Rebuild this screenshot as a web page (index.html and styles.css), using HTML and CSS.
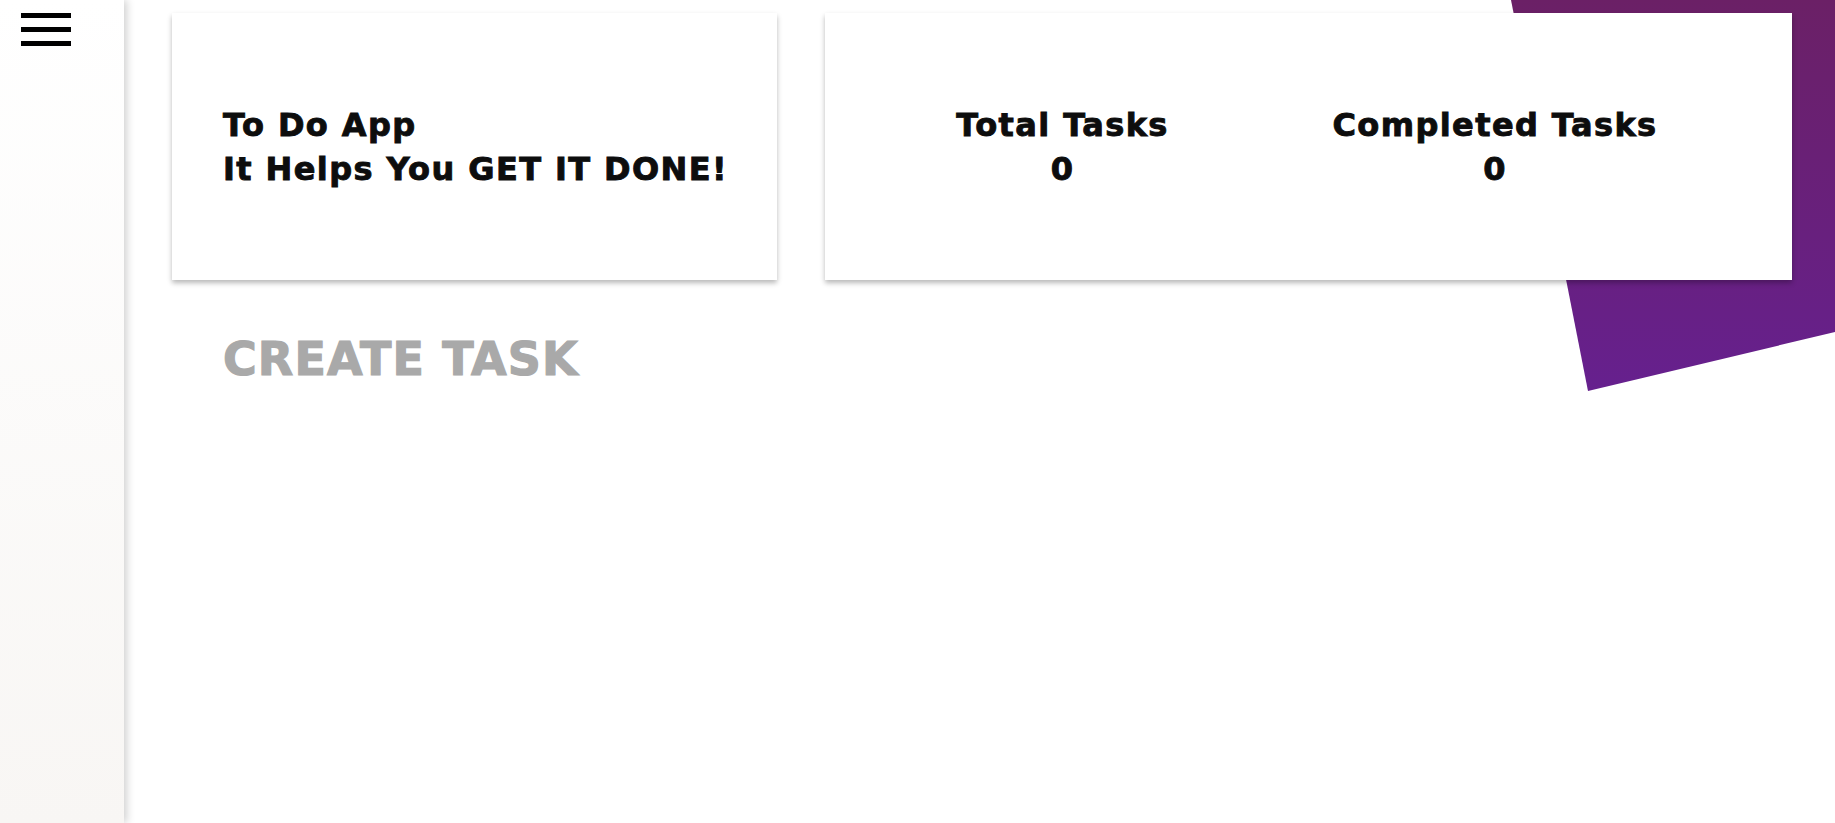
FILE: index.html
```html
<!DOCTYPE html>
<html lang="en">
<head>
<meta charset="utf-8">
<title>To Do App</title>
<link rel="stylesheet" href="styles.css">
</head>
<body>
  <aside class="sidebar">
    <button class="menu-btn" aria-label="Menu">
      <span class="bar"></span>
      <span class="bar"></span>
      <span class="bar"></span>
    </button>
  </aside>
  <main class="main">
    <svg class="blob" viewBox="0 0 324 391" preserveAspectRatio="none" aria-hidden="true">
      <defs>
        <linearGradient id="g" x1="0" y1="0" x2="0" y2="1">
          <stop offset="0" stop-color="#6b2066"/>
          <stop offset="1" stop-color="#66208e"/>
        </linearGradient>
      </defs>
      <polygon points="0,0 324,0 324,332 77,391" fill="url(#g)"/>
    </svg>
    <section class="cards">
      <div class="card intro">
        <h1 class="intro-text">To Do App<br>It Helps You GET IT DONE!</h1>
      </div>
      <div class="card stats">
        <div class="stat">
          <div class="stat-label">Total Tasks</div>
          <div class="stat-value">0</div>
        </div>
        <div class="stat">
          <div class="stat-label">Completed Tasks</div>
          <div class="stat-value">0</div>
        </div>
      </div>
    </section>
    <h2 class="section-title">CREATE TASK</h2>
  </main>
</body>
</html>
```

FILE: styles.css
```css
html, body {
  margin: 0;
  padding: 0;
  height: 100%;
}
body {
  display: flex;
  background: #ffffff;
  font-family: "DejaVu Sans", Inter, sans-serif;
  color: #0d0d0d;
  overflow: hidden;
}
.sidebar {
  width: 124px;
  flex: 0 0 124px;
  height: 100vh;
  background: linear-gradient(to bottom, #ffffff 0%, #f8f6f4 100%);
  box-shadow: 3px 0 8px rgba(0, 0, 0, 0.18);
  position: relative;
  z-index: 2;
  box-sizing: border-box;
  padding: 13px 0 0 21px;
}
.menu-btn {
  display: flex;
  flex-direction: column;
  gap: 9px;
  padding: 0;
  margin: 0;
  border: 0;
  background: none;
}
.bar {
  display: block;
  width: 50px;
  height: 5px;
  background: #000;
}
.main {
  flex: 1;
  position: relative;
  padding: 13px 43px 0 48px;
}
.blob {
  position: absolute;
  top: 0;
  right: 0;
  width: 324px;
  height: 391px;
  z-index: 0;
}
.cards {
  position: relative;
  z-index: 1;
  display: grid;
  grid-template-columns: 605px 1fr;
  column-gap: 48px;
}
.card {
  background: #fff;
  height: 267px;
  box-shadow: 0 3px 5px rgba(0, 0, 0, 0.28);
  display: flex;
  align-items: center;
}
.intro {
  padding-left: 51px;
}
.intro-text {
  margin: 0;
  font-size: 32px;
  line-height: 44px;
  font-weight: 700;
  letter-spacing: 1.4px;
  white-space: nowrap;
  -webkit-text-stroke: 0.9px currentColor;
}
.stats {
  display: grid;
  grid-template-columns: 275px 400px;
  column-gap: 95px;
  padding-left: 100px;
  align-content: center;
}
.stat {
  text-align: center;
  font-size: 32px;
  line-height: 44px;
  font-weight: 700;
  letter-spacing: 1.4px;
  white-space: nowrap;
  -webkit-text-stroke: 0.9px currentColor;
}
.section-title {
  position: relative;
  z-index: 1;
  margin: 51px 0 0 51px;
  font-size: 46px;
  line-height: 56px;
  font-weight: 700;
  color: #a9a9a9;
  letter-spacing: 1.1px;
  -webkit-text-stroke: 1.2px currentColor;
}
```
